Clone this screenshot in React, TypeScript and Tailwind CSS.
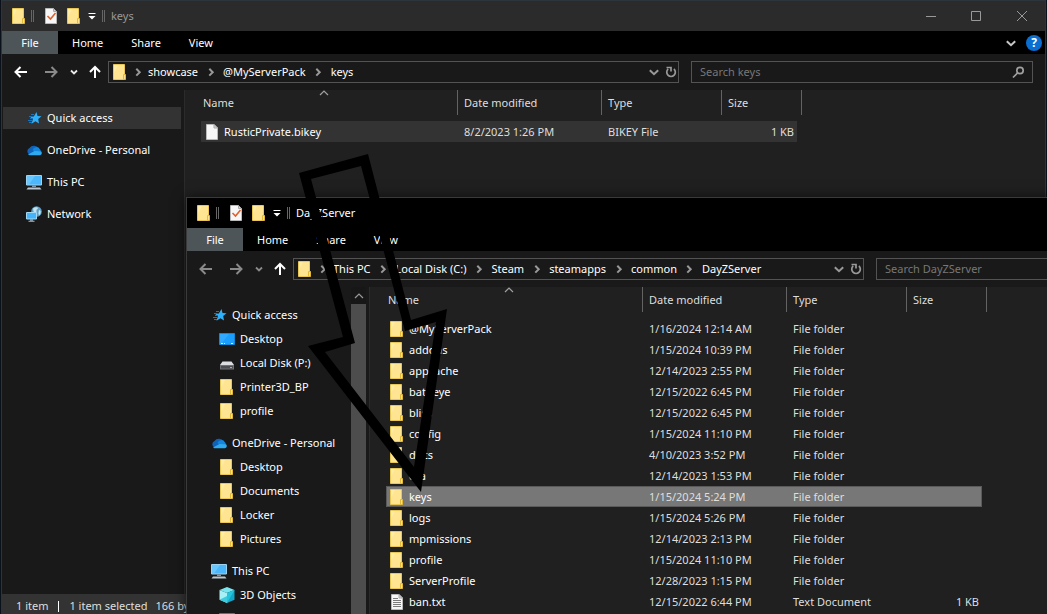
import type { ReactNode } from 'react';

type IconName = 'star' | 'cloud' | 'pc' | 'network' | 'desktop' | 'disk' | 'folder' | 'cube' | 'file' | 'text';

interface TreeItem {
  label: string;
  icon: IconName;
  active?: boolean;
  children?: TreeItem[];
}

interface FileRow {
  name: string;
  date: string;
  type: string;
  size?: string;
  icon: IconName;
  state?: 'hover' | 'selected';
}

const keysTree: TreeItem[] = [
  { label: 'Quick access', icon: 'star', active: true },
  { label: 'OneDrive - Personal', icon: 'cloud' },
  { label: 'This PC', icon: 'pc' },
  { label: 'Network', icon: 'network' },
];

const serverTree: TreeItem[] = [
  {
    label: 'Quick access',
    icon: 'star',
    children: [
      { label: 'Desktop', icon: 'desktop' },
      { label: 'Local Disk (P:)', icon: 'disk' },
      { label: 'Printer3D_BP', icon: 'folder' },
      { label: 'profile', icon: 'folder' },
    ],
  },
  {
    label: 'OneDrive - Personal',
    icon: 'cloud',
    children: [
      { label: 'Desktop', icon: 'folder' },
      { label: 'Documents', icon: 'folder' },
      { label: 'Locker', icon: 'folder' },
      { label: 'Pictures', icon: 'folder' },
    ],
  },
  {
    label: 'This PC',
    icon: 'pc',
    children: [
      { label: '3D Objects', icon: 'cube' },
      { label: 'Desktop', icon: 'desktop' },
    ],
  },
];

const keysFiles: FileRow[] = [
  { name: 'RusticPrivate.bikey', date: '8/2/2023 1:26 PM', type: 'BIKEY File', size: '1 KB', icon: 'file', state: 'hover' },
];

const serverFiles: FileRow[] = [
  { name: '@MyServerPack', date: '1/16/2024 12:14 AM', type: 'File folder', icon: 'folder' },
  { name: 'addons', date: '1/15/2024 10:39 PM', type: 'File folder', icon: 'folder' },
  { name: 'appcache', date: '12/14/2023 2:55 PM', type: 'File folder', icon: 'folder' },
  { name: 'battleye', date: '12/15/2022 6:45 PM', type: 'File folder', icon: 'folder' },
  { name: 'bliss', date: '12/15/2022 6:45 PM', type: 'File folder', icon: 'folder' },
  { name: 'config', date: '1/15/2024 11:10 PM', type: 'File folder', icon: 'folder' },
  { name: 'docs', date: '4/10/2023 3:52 PM', type: 'File folder', icon: 'folder' },
  { name: 'dta', date: '12/14/2023 1:53 PM', type: 'File folder', icon: 'folder' },
  { name: 'keys', date: '1/15/2024 5:24 PM', type: 'File folder', icon: 'folder', state: 'selected' },
  { name: 'logs', date: '1/15/2024 5:26 PM', type: 'File folder', icon: 'folder' },
  { name: 'mpmissions', date: '12/14/2023 2:13 PM', type: 'File folder', icon: 'folder' },
  { name: 'profile', date: '1/15/2024 11:10 PM', type: 'File folder', icon: 'folder' },
  { name: 'ServerProfile', date: '12/28/2023 1:15 PM', type: 'File folder', icon: 'folder' },
  { name: 'ban.txt', date: '12/15/2022 6:44 PM', type: 'Text Document', size: '1 KB', icon: 'text' },
];

function Icon({ name }: { name: IconName }) {
  return (
    <svg width="16" height="16" viewBox="0 0 16 16" className="shrink-0">
      {name === 'folder' && (
        <>
          <path d="M1.5 .5h11v15h-11z" fill="#ffe591" stroke="#e9c655" />
          <path d="M2 1h4L2 9z" fill="#fff0b4" opacity=".6" />
          <path d="M11.5 10.5h2v5h-2z" fill="#ffe189" stroke="#e3b93c" />
        </>
      )}
      {name === 'star' && (
        <>
          <path d="M10.500 2l1 4 4 .3-3.300 2.700.8 4.500-3.600-2.300-3.900 2.500 1.400-4.400-3-2.600 3.900-.3z" fill="#2fb0fb" />
          <path d="M5 4.500h3M3 6.500h3M4 8.500h3M2 10.500h4M3 12.500h3" stroke="#1276c0" />
        </>
      )}
      {name === 'cloud' && (
        <>
          <path d="M3.500 12.500a3.500 3.500 0 0 1 0-6.500A5 4.500 0 0 1 12.500 6.500 3.500 3.500 0 0 1 12.500 13z" fill="#0f62b8" />
          <path d="M6.500 8A4 4 0 0 1 14 7.500l1 1-5 2z" fill="#1486dc" />
          <path d="M2 12.500l6.500-3.500 6.500.3A2.300 2.300 0 0 1 13.800 13.300H3.500z" fill="#2eaaf0" />
        </>
      )}
      {name === 'pc' && (
        <>
          <path d="M.5 1.500h15v9.500H.5z" fill="#4cb8fb" stroke="#9bd3f0" />
          <path d="M1 2h8L3 10.500H1z" fill="#7fd0ff" opacity=".6" />
          <path d="M6 11.500h4v1.500H6z" fill="#7e98aa" />
          <path d="M2 13.500h12l1.500 2H.5z" fill="#b9c8d3" />
        </>
      )}
      {name === 'network' && (
        <>
          <circle cx="10.500" cy="5.500" r="5.300" fill="#5e9fc4" />
          <path d="M7 2.500C9 .5 12 1 12 2s-2 1.500-1.500 3-2 2-3 .5zM13 4c2 0 2.500 3 .5 5-1.500 0-1-3-.5-5z" fill="#c3e3ee" />
          <path d="M.5 6.500h10v6.500H.5z" fill="#45b4fb" stroke="#a2d8f4" />
          <path d="M4 13.500h3v1H4zM2.500 14.800h6v1h-6z" fill="#a9bac6" />
        </>
      )}
      {name === 'desktop' && (
        <>
          <path d="M.5 2.500h15v11H.5z" fill="#1a9fff" stroke="#1386d8" />
          <path d="M1 3h9L3 12H1z" fill="#45b3ff" opacity=".5" />
          <path d="M2 12.500h2M5 12.500h1M12 12.500h2" stroke="#d5efff" />
        </>
      )}
      {name === 'disk' && (
        <>
          <path d="M3.500 6.500h9l2.500 3.500H1z" fill="#dcdde2" />
          <path d="M1 10h14v4.500H1z" fill="#6f7175" />
          <path d="M2 11h12v2.500H2z" fill="#4b4d50" />
          <path d="M11 12h2v1h-2z" fill="#48e665" />
        </>
      )}
      {name === 'cube' && (
        <>
          <path d="M8 0l7.500 3L8 6 .5 3z" fill="#7be6f0" />
          <path d="M.5 3L8 6v10L.5 12.800z" fill="#a8f0f5" />
          <path d="M15.500 3L8 6v10l7.500-3.200z" fill="#14a6c8" />
          <path d="M8 6l7.500-3-7.500 13z" fill="#24c4dc" />
          <path d="M.5 12.800L8 9v7z" fill="#3ccce0" />
        </>
      )}
      {(name === 'file' || name === 'text') && (
        <>
          <path d="M2.500 .5h7.500l3.500 3.500v11.500h-11z" fill="#f7f7f7" stroke="#b9b9b9" />
          <path d="M10 .5v3.500h3.500z" fill="#d8d8d8" stroke="#a8a8a8" />
        </>
      )}
      {name === 'text' && <path d="M4 4.500h5M4 6.500h8M4 8.500h8M4 10.500h8M4 12.500h8" stroke="#7b7b7b" />}
    </svg>
  );
}

function CheckedFile() {
  return (
    <svg width="14" height="16" viewBox="0 0 14 16" className="shrink-0">
      <path d="M1.500 .5h8l3 3v12h-11z" fill="#f7f7f7" stroke="#b9b9b9" />
      <path d="M9.500 .5v3h3z" fill="#d8d8d8" stroke="#a8a8a8" />
      <path d="M3.500 8l3 3 5-6" fill="none" stroke="#e2612b" strokeWidth="1.600" />
    </svg>
  );
}

function Chevron({ direction = 'down', className = '' }: { direction?: 'down' | 'right' | 'up'; className?: string }) {
  const paths = { down: 'M.8 3.200l4.200 4 4.200-4', right: 'M3.300 1.800L6.700 5.200l-3.400 3.400', up: 'M1 7l4-4 4 4' };
  return (
    <svg width="10" height="10" viewBox="0 0 10 10" fill="none" stroke="currentColor" strokeWidth={direction === 'up' ? 1.2 : 2} className={`shrink-0 ${className}`}>
      <path d={paths[direction]} />
    </svg>
  );
}

function Separator() {
  return <span className="h-3 w-[3px] shrink-0 border-x border-[#666666]" />;
}

function Arrow({ d, label, muted }: { d: string; label: string; muted?: boolean }) {
  return (
    <button aria-label={label} className={muted ? 'text-[#8a8a8a]' : 'text-white'}>
      <svg width="14" height="14" viewBox="0 0 14 14" fill="none" stroke="currentColor" strokeWidth="2">
        <path d={d} />
      </svg>
    </button>
  );
}

function TreeLink({ item, nested }: { item: TreeItem; nested?: boolean }) {
  return (
    <div className="flex h-6 items-center pl-px pr-[3px]">
      <a
        href="#"
        className={`flex h-[22px] w-full items-center gap-[5px] whitespace-nowrap ${nested ? 'pl-[31px]' : 'pl-[23px]'} ${item.active ? 'bg-[#333333]' : ''}`}
      >
        <Icon name={item.icon} />
        {item.label}
      </a>
    </div>
  );
}

function Tree({ items }: { items: TreeItem[] }) {
  return (
    <ul className="flex min-w-0 flex-1 flex-col gap-2 pt-4">
      {items.map((item) => (
        <li key={item.label}>
          <TreeLink item={item} />
          {item.children && (
            <ul>
              {item.children.map((child) => (
                <li key={child.label}>
                  <TreeLink item={child} nested />
                </li>
              ))}
            </ul>
          )}
        </li>
      ))}
    </ul>
  );
}

function HeaderCell({ children }: { children: ReactNode }) {
  return <div className="flex h-[25px] items-center border-r border-[#636363] pl-1.5">{children}</div>;
}

function FileTable({ rows }: { rows: FileRow[] }) {
  const stateClass = {
    hover: 'bg-[#333333] border-[#333333]',
    selected: 'bg-[#777777] border-[#5a5a5a]',
    none: 'border-transparent',
  };

  return (
    <table className="ml-4 w-[601px] table-fixed border-separate border-spacing-0 text-left">
      <colgroup>
        <col className="w-[257px]" />
        <col className="w-[144px]" />
        <col className="w-[120px]" />
        <col className="w-[75px]" />
        <col className="w-[5px]" />
      </colgroup>
      <thead className="text-[#dedede]">
        <tr className="h-[31px] align-top">
          <th className="p-0 font-normal">
            <div className="relative flex h-[25px] items-center border-r border-[#636363] pl-0.5">
              Name
              <Chevron direction="up" className="absolute -top-0.5 right-32 text-[#a0a0a0]" />
            </div>
          </th>
          <th className="p-0 font-normal"><HeaderCell>Date modified</HeaderCell></th>
          <th className="p-0 font-normal"><HeaderCell>Type</HeaderCell></th>
          <th colSpan={2} className="p-0 font-normal"><HeaderCell>Size</HeaderCell></th>
        </tr>
      </thead>
      <tbody>
        {rows.map((row) => {
          const cell = `border-y p-0 ${stateClass[row.state ?? 'none']}`;
          return (
            <tr key={row.name} className="h-[21px] whitespace-nowrap leading-4 text-[#dedede]">
              <td className={`${cell} border-l`}>
                <div className="flex items-center gap-1 pl-0.5 text-white">
                  <Icon name={row.icon} />
                  {row.name}
                </div>
              </td>
              <td className={`${cell} pl-1.5`}>{row.date}</td>
              <td className={`${cell} pl-1.5`}>{row.type}</td>
              <td className={`${cell} border-r pr-0.5 text-right`}>{row.size}</td>
              <td className="p-0" />
            </tr>
          );
        })}
      </tbody>
    </table>
  );
}

interface ExplorerProps {
  title: string;
  path: string[];
  tree: TreeItem[];
  files: FileRow[];
  focused?: boolean;
  canGoBack?: boolean;
  scrollable?: boolean;
  className: string;
  status?: ReactNode;
}

function Explorer({ title, path, tree, files, focused, canGoBack, scrollable, className, status }: ExplorerProps) {
  return (
    <section className={`absolute flex h-full w-[calc(100%-2px)] flex-col border border-b-0 bg-[#191919] ${className}`}>
      {/* Title bar */}
      <div className={`flex h-[30px] shrink-0 items-center ${focused ? 'bg-black text-white' : 'bg-[#2b2b2b] text-[#999999]'}`}>
        <div className="flex flex-1 items-center pl-[9px]">
          <Icon name="folder" />
          <div className="flex items-center gap-2.5 pl-1">
            <Separator />
            <CheckedFile />
          </div>
          <div className="flex items-center gap-1.5 pl-2">
            <Icon name="folder" />
            <button aria-label="Customize Quick Access Toolbar" className="text-white">
              <svg width="8" height="8" viewBox="0 0 8 8" fill="currentColor">
                <path d="M.5 1h7v1h-7zM.5 4h7L4 7.500z" />
              </svg>
            </button>
            <Separator />
          </div>
          <h2 className="pl-1.5">{title}</h2>
        </div>
        <div className="flex items-center text-[#999999]">
          <button aria-label="Minimize" className="flex w-[45px] justify-center">
            <svg width="10" height="10" stroke="currentColor"><path d="M0 5.500h10" /></svg>
          </button>
          <button aria-label="Maximize" className="flex w-[45px] justify-center">
            <svg width="10" height="10" fill="none" stroke="currentColor"><path d="M.5 .5h9v9h-9z" /></svg>
          </button>
          <button aria-label="Close" className="flex w-[47px] justify-center">
            <svg width="10" height="10" stroke="currentColor"><path d="M0 0l10 10M10 0L0 10" /></svg>
          </button>
        </div>
      </div>

      {/* Ribbon tabs */}
      <div className="flex h-[23px] shrink-0 items-center bg-black text-white">
        <button className="h-full w-14 bg-[#4d5559]">File</button>
        <button className="h-full px-3.5">Home</button>
        <button className="h-full px-3.5">Share</button>
        <button className="h-full px-3.5">View</button>
        <div className="ml-auto flex items-center gap-2.5 pr-[3px]">
          <button aria-label="Expand the Ribbon" className="text-[#c8c8c8]"><Chevron /></button>
          <button aria-label="Help" className="flex h-4 w-4 items-center justify-center rounded-full bg-[#0a6fd0] text-xs font-bold leading-4">?</button>
        </div>
      </div>

      {/* Address bar */}
      <div className="flex h-9 shrink-0 items-center gap-3 pr-3">
        <div className="flex min-w-0 flex-1 items-center">
          <div className="flex w-[106px] shrink-0 items-center pl-3">
            <Arrow label="Back" d="M13 7H2M6.500 2L1.500 7l5 5" muted={!canGoBack} />
            <span className="w-4" />
            <Arrow label="Forward" d="M1 7h11M7.500 2l5 5-5 5" muted />
            <button aria-label="Recent locations" className={`ml-3 mr-2.5 ${canGoBack ? 'text-[#e8e8e8]' : 'text-[#8a8a8a]'}`}>
              <svg width="8" height="8" viewBox="0 0 8 8" fill="none" stroke="currentColor" strokeWidth="1.800"><path d="M1 2.500l3 3 3-3" /></svg>
            </button>
            <Arrow label="Up" d="M7 13V2M2 7l5-5 5 5" />
          </div>
          <div className="flex h-[22px] min-w-0 flex-1 items-center border border-[#535353] pl-[3px] text-white">
            <Icon name="folder" />
            {path.map((crumb, index) => (
              <span key={crumb} className="flex items-center whitespace-nowrap">
                <span className={`flex justify-center text-[#999999] ${index === 0 ? 'w-5' : 'w-[25px]'}`}>
                  <Chevron direction="right" />
                </span>
                <a href="#">{crumb}</a>
              </span>
            ))}
            <button aria-label="Previous locations" className="ml-auto mr-1.5 text-[#999999]"><Chevron /></button>
            <button aria-label="Refresh" className="mr-px text-[#999999]">
              <svg width="12" height="12" viewBox="0 0 12 12" fill="none" stroke="currentColor" strokeWidth="1.700">
                <path d="M3.200 3A4.300 4.300 0 1 0 8.900 3M1.500 1.500h4.500v4" />
              </svg>
            </button>
          </div>
        </div>
        <label className="flex h-[22px] w-[342px] items-center border border-[#535353] pl-2 pr-[7px]">
          <input
            type="search"
            aria-label={`Search ${title}`}
            placeholder={`Search ${title}`}
            className="min-w-0 flex-1 bg-transparent text-white outline-none placeholder:text-[#777777]"
          />
          <svg width="13" height="13" viewBox="0 0 13 13" fill="none" stroke="#a0a0a0" strokeWidth="1.700">
            <circle cx="8" cy="4.500" r="3.200" />
            <path d="M5.500 7L1 11.500" />
          </svg>
        </label>
      </div>

      {/* Navigation tree and file list */}
      <div className="flex min-h-0 flex-1 overflow-hidden">
        <nav className="flex w-[183px] shrink-0 border-r border-[#2b2b2b] text-white">
          <Tree items={tree} />
          {scrollable && (
            <div className="mr-[3px] flex w-[15px] shrink-0 flex-col bg-[#171717]">
              <div className="flex h-[17px] items-center justify-center text-[#999999]"><Chevron direction="up" /></div>
              <div className="flex-1 bg-[#4d4d4d]" />
            </div>
          )}
        </nav>
        <main className="min-w-0 flex-1 bg-[#202020]">
          <FileTable rows={files} />
        </main>
      </div>
      {status}
    </section>
  );
}

export default function App() {
  return (
    <div className="relative h-screen overflow-hidden bg-[#0b111a] font-['Noto_Sans','Open_Sans',sans-serif] text-[11px] leading-4">
      <Explorer
        title="keys"
        path={['showcase', '@MyServerPack', 'keys']}
        tree={keysTree}
        files={keysFiles}
        canGoBack
        className="left-px top-0 border-[#2c343c]"
        status={
          <footer className="flex h-5 shrink-0 items-center whitespace-nowrap bg-[#333333] pl-3.5 pt-1 text-[#dedede]">
            <span className="mr-2.5">1 item</span>
            <span className="mr-2.5 h-[11px] w-px bg-white" />
            <span className="mr-2">1 item selected</span>
            <span>166 bytes</span>
          </footer>
        }
      />
      <Explorer
        title="DayZServer"
        path={['This PC', 'Local Disk (C:)', 'Steam', 'steamapps', 'common', 'DayZServer']}
        tree={serverTree}
        files={serverFiles}
        focused
        scrollable
        className="left-[186px] top-[197px] border-[#3a3a3a] shadow-[0_0_12px_rgba(0,0,0,0.6)]"
      />

      {/* Arrow pointing from the key file to the server keys folder */}
      <svg width="150" height="340" viewBox="298 153 150 340" className="pointer-events-none absolute left-[298px] top-[153px]">
        <path
          fillRule="evenodd"
          d="M299 173L368 154L411 320L447 309L421 492L308 346L343 337ZM311 179L361 166L405 331L436 322L414 467L325 352L355 343Z"
        />
      </svg>
    </div>
  );
}
